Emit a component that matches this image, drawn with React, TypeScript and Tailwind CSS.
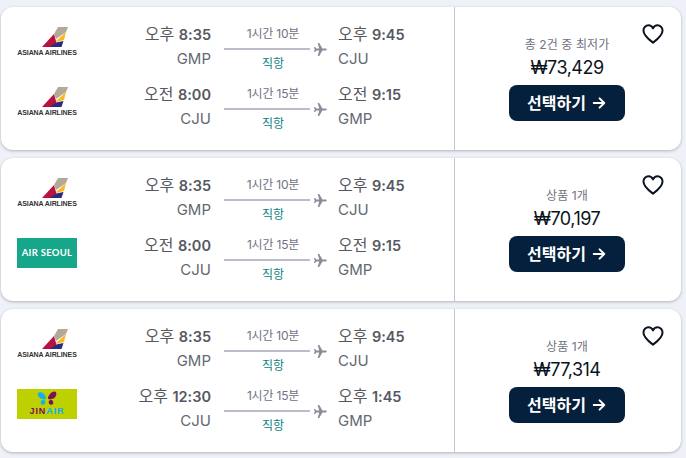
import React from "react";

const FONT = "font-['Inter','Noto_Sans_CJK_KR',sans-serif]";

function Asiana() {
  return (
    <div className="w-[60px] h-[30px] flex flex-col items-center">
      <svg width="26" height="20" viewBox="0 0 26 20" className="ml-[16px] shrink-0">
        <path d="M0 20 L12 7 L14 14 L14 16 L10 20 Z" fill="#b8123f" />
        <path d="M16 0 L26 0 L24 5 L14 12 L12 7 Z" fill="#b3a999" />
        <path d="M14 14 L24 5 L22 13 L14 15 Z" fill="#fbb826" />
        <path d="M8 20 L14 15.5 L21.5 14 L19.5 20 Z" fill="#2b2a7c" />
      </svg>
      <span className="mt-[2px] text-[7px] leading-[8px] font-bold text-[#333] whitespace-nowrap font-['Liberation_Sans',sans-serif] tracking-[-0.1px]">ASIANA AIRLINES</span>
    </div>
  );
}

function AirSeoul() {
  return (
    <div className="w-[60px] h-[30px] bg-[#16a78a] flex items-center justify-center">
      <span className="text-[9.5px] font-bold text-white whitespace-nowrap tracking-[0.3px] font-['Lato',sans-serif]">AIR SEOUL</span>
    </div>
  );
}

function JinAir() {
  return (
    <div className="w-[60px] h-[30px] bg-[#bdd000] flex flex-col items-center pt-[1px]">
      <svg width="20" height="17" viewBox="0 0 22 18" className="shrink-0">
        <path d="M1 3 C3 1 8 2 10 8 C10 11 6 10 4 9 C2 8 0 5 1 3 Z" fill="#12aef0" />
        <path d="M5 11 C7 10 10 11 9 14 C8 17 4 16 4 14 Z" fill="#12aef0" />
        <path d="M21 2 C19 0 14 2 12 8 C12 11 16 10 18 9 C20 8 22 5 21 2 Z" fill="#7c0f55" />
        <path d="M17 11 C15 10 12 11 13 14 C14 17 18 16 18 14 Z" fill="#7c0f55" />
      </svg>
      <span className="text-[9px] leading-[9px] font-bold text-[#7c0f55] whitespace-nowrap tracking-[0.9px] font-['Liberation_Sans',sans-serif]">
        JIN<span className="text-[#12aef0]">AIR</span>
      </span>
    </div>
  );
}

function Plane() {
  return (
    <svg width="13" height="13" viewBox="0 0 24 24" className="shrink-0" fill="#8d8a99">
      <path d="M23.5 12c0-1-.9-1.7-2-1.7h-6L9.7 0H6.9l2.7 10.3H4.4L2 7.3H0l1.3 4.7L0 16.7h2l2.4-3h5.2L6.9 24h2.8l5.8-10.3h6c1.1 0 2-.7 2-1.7Z" />
    </svg>
  );
}

type Leg = { logo: React.ReactNode; dep: [string, string]; from: string; dur: string; arr: [string, string]; to: string };

function Clock({ v }: { v: [string, string] }) {
  return (
    <div className="leading-[24px] text-[#545860] whitespace-nowrap">
      <span className="text-[16px] font-normal">{v[0]}</span>{" "}
      <span className="text-[14.5px] font-semibold">{v[1]}</span>
    </div>
  );
}

function LegRow({ logo, dep, from, dur, arr, to }: Leg) {
  return (
    <div className="flex items-center h-[60px]">
      <div className="w-[60px] ml-4 shrink-0 -mt-[8px]">{logo}</div>
      <div className="w-[134px] text-right shrink-0">
        <Clock v={dep} />
        <div className="text-[15px] leading-[24px] text-[#626971]">{from}</div>
      </div>
      <div className="ml-[13px] w-[103px] flex flex-col shrink-0 mt-[7px]">
        <div className="w-[98px] text-center text-[12px] leading-[16px] text-[#6f7280] tracking-[-0.2px] whitespace-nowrap">{dur}</div>
        <div className="flex items-center h-[12px] mt-[1px]">
          <div className="w-[87px] h-[2px] bg-[#bcbcca]" />
          <div className="ml-[4px]"><Plane /></div>
        </div>
        <div className="w-[98px] text-center text-[12px] leading-[18px] text-[#0b7f7f]">직항</div>
      </div>
      <div className="ml-[11px] shrink-0">
        <Clock v={arr} />
        <div className="text-[15px] leading-[24px] text-[#626971]">{to}</div>
      </div>
    </div>
  );
}

function Heart() {
  return (
    <svg width="22" height="20" viewBox="0 0 24 22" fill="none" stroke="#0b1220" strokeWidth="2.2" strokeLinejoin="round">
      <path d="M12 20.5 C8 17.5 1.5 13 1.5 7.2 C1.5 3.8 4.2 1.5 7 1.5 C9 1.5 11 2.7 12 4.8 C13 2.7 15 1.5 17 1.5 C19.8 1.5 22.5 3.8 22.5 7.2 C22.5 13 16 17.5 12 20.5 Z" />
    </svg>
  );
}

function Card({ legs, label, price }: { legs: Leg[]; label: string; price: string }) {
  return (
    <div className="h-[143px] bg-white rounded-[12px] shadow-[0_1px_3px_rgba(37,32,31,0.3)] flex">
      <div className="w-[454px] border-r border-[#c4c7cf] shrink-0 flex flex-col pt-[9px]">
        {legs.map((l, i) => <LegRow key={i} {...l} />)}
      </div>
      <div className="flex-1 relative flex flex-col items-center pt-[30px] pr-[2px]">
        <div className="text-[12px] leading-[16px] text-[#6f7280] tracking-[0.1px] whitespace-nowrap">{label}</div>
        <div className="text-[18px] leading-[26px] text-[#0a1420] tracking-[-0.5px] mt-[2px]">{price}</div>
        <div className="mt-[4px] -ml-[1px] w-[116px] h-[36px] rounded-[8px] bg-[#05203c] flex items-center justify-center gap-[6px] text-white text-[16px] font-bold">
          <span>선택하기</span>
          <svg width="14" height="14" viewBox="0 0 24 24" fill="none" stroke="white" strokeWidth="3.4" strokeLinecap="round" strokeLinejoin="round"><path d="M3 12h18M13 4l8 8-8 8" /></svg>
        </div>
        <div className="absolute top-[17px] right-[17px]"><Heart /></div>
      </div>
    </div>
  );
}

const asiana = <Asiana />;
const out = { dep: ["오후", "8:35"] as [string, string], from: "GMP", dur: "1시간 10분", arr: ["오후", "9:45"] as [string, string], to: "CJU" };
const back = { dep: ["오전", "8:00"] as [string, string], from: "CJU", dur: "1시간 15분", arr: ["오전", "9:15"] as [string, string], to: "GMP" };

export default function App() {
  return (
    <div className={`${FONT} w-[686px] h-[458px] overflow-hidden bg-[#eff1f8] pl-[1px] pr-[5px] pt-[7px] flex flex-col gap-[8px]`}>
      <Card label="총 2건 중 최저가" price="₩73,429" legs={[
        { logo: asiana, ...out },
        { logo: asiana, ...back },
      ]} />
      <Card label="상품 1개" price="₩70,197" legs={[
        { logo: asiana, ...out },
        { logo: <AirSeoul />, ...back },
      ]} />
      <Card label="상품 1개" price="₩77,314" legs={[
        { logo: asiana, ...out },
        { logo: <JinAir />, dep: ["오후", "12:30"], from: "CJU", dur: "1시간 15분", arr: ["오후", "1:45"], to: "GMP" },
      ]} />
    </div>
  );
}
